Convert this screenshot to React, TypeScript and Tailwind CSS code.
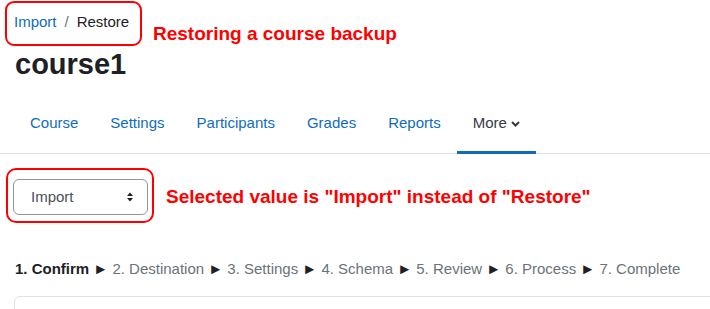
const tabs = ["Course", "Settings", "Participants", "Grades", "Reports"];

const steps = [
  "2. Destination",
  "3. Settings",
  "4. Schema",
  "5. Review",
  "6. Process",
  "7. Complete",
];

const SelectArrows = () => (
  <svg width="6" height="10" viewBox="0 0 6 10" className="shrink-0">
    <path d="M0 4 L3 0.5 L6 4 Z" fill="#1d2125" />
    <path d="M0 6 L3 9.5 L6 6 Z" fill="#1d2125" />
  </svg>
);

const Chevron = () => (
  <svg width="9" height="6" viewBox="0 0 9 6" className="ml-[4px] mt-[2px]">
    <path d="M1 1 L4.5 4.5 L8 1" fill="none" stroke="#343a40" strokeWidth="2" />
  </svg>
);

export default function App() {
  return (
    <div className="w-[710px] h-[309px] overflow-hidden bg-white font-['Liberation_Sans',Arial,sans-serif]">
      {/* breadcrumb + note */}
      <div className="flex items-start pt-[1px] pl-[5px]">
        <div className="w-[137px] h-[45px] border-2 border-[#ff0000] rounded-[9px] pl-[7px] pt-[8px] text-[15px] leading-[22px] whitespace-nowrap">
          <span className="text-[#0f6cbf]">Import</span>
          <span className="text-[#6a737b] px-[8px]">/</span>
          <span className="text-[#1d2125]">Restore</span>
        </div>
        <p className="ml-[11px] mt-[22px] text-[19px] leading-[22px] font-bold text-[#ff0000]">
          Restoring a course backup
        </p>
      </div>

      <h1 className="ml-[15px] text-[29px] leading-[36px] font-bold text-[#1d2125]">course1</h1>

      {/* secondary navigation */}
      <nav className="mt-[12px] flex h-[60px] border-b border-[#dee2e6] pl-[14px] text-[15px] leading-[22px]">
        {tabs.map((t) => (
          <a
            key={t}
            className="flex h-[60px] items-center px-4 border-b-[3px] border-transparent text-[#0f6cbf]"
          >
            {t}
          </a>
        ))}
        <a className="flex h-[60px] items-center px-4 border-b-[3px] border-[#0f6cbf] text-[#343a40]">
          More
          <Chevron />
        </a>
      </nav>

      {/* select + note */}
      <div className="mt-[14px] ml-[6px] flex items-center">
        <div className="w-[148px] h-[55px] border-2 border-[#ff0000] rounded-[10px] pl-[5px] pt-[9px]">
          <div className="w-[135px] h-[36px] border border-[#8f959e] rounded-[6px] flex items-center justify-between pl-[17px] pr-[14px] text-[15px] text-[#495057]">
            <span>Import</span>
            <SelectArrows />
          </div>
        </div>
        <p className="ml-[12px] mt-[2px] text-[19px] leading-[22px] font-bold text-[#ff0000]">
          Selected value is "Import" instead of "Restore"
        </p>
      </div>

      {/* progress steps */}
      <div className="mt-[35px] ml-[15px] text-[15px] leading-[22px] whitespace-nowrap">
        <span className="font-bold text-[#1d2125]">1. Confirm</span>
        {steps.map((s) => (
          <span key={s} className="text-[#6a737b]">
            <span className="text-[#1d2125]"> ► </span>
            {s}
          </span>
        ))}
      </div>

      <div className="mt-[16px] ml-[14px] w-[720px] h-[40px] border border-[#dee2e6] rounded-[6px]" />
    </div>
  );
}
